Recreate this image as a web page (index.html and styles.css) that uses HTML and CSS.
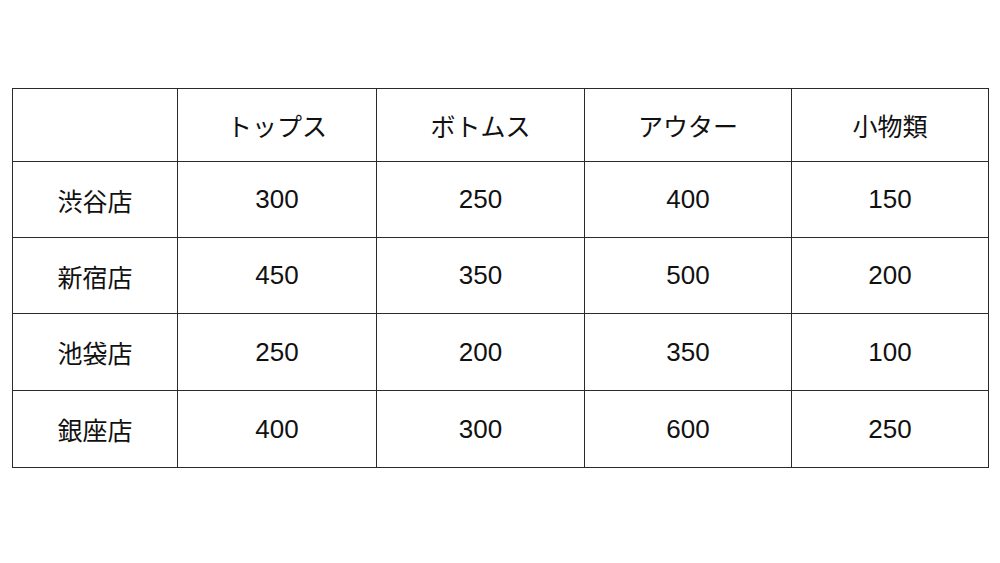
FILE: index.html
```html
<!DOCTYPE html>
<html lang="ja">
<head>
<meta charset="utf-8">
<link rel="stylesheet" href="styles.css">
</head>
<body>
<table class="sales">
  <colgroup>
    <col class="c0"><col class="c1"><col class="c2"><col class="c3"><col class="c4">
  </colgroup>
  <tr class="r-head"><td></td><td class="ja">トップス</td><td class="ja">ボトムス</td><td class="ja">アウター</td><td class="ja">小物類</td></tr>
  <tr class="r1"><td class="ja">渋谷店</td><td>300</td><td>250</td><td>400</td><td>150</td></tr>
  <tr class="r2"><td class="ja">新宿店</td><td>450</td><td>350</td><td>500</td><td>200</td></tr>
  <tr class="r3"><td class="ja">池袋店</td><td>250</td><td>200</td><td>350</td><td>100</td></tr>
  <tr class="r4"><td class="ja">銀座店</td><td>400</td><td>300</td><td>600</td><td>250</td></tr>
</table>
</body>
</html>
```
FILE: styles.css
```css
html, body {
  margin: 0;
  padding: 0;
  background: #ffffff;
}
body {
  padding: 88px 12px 0 12px;
  font-family: "Liberation Sans", "Noto Sans CJK JP", sans-serif;
  color: #111111;
}
.sales {
  border-collapse: collapse;
  table-layout: fixed;
  width: 977px;
}
.sales td {
  border: 1px solid #2a2a2a;
  text-align: center;
  vertical-align: middle;
  font-size: 26px;
  padding: 0;
}
.sales td.ja {
  font-size: 25px;
}
.c0 { width: 165px; }
.c1 { width: 199px; }
.c2 { width: 208px; }
.c3 { width: 207px; }
.c4 { width: 197px; }
.r-head td { height: 72px; }
.r1 td, .r2 td { height: 75px; }
.r3 td, .r4 td { height: 76px; }
```
